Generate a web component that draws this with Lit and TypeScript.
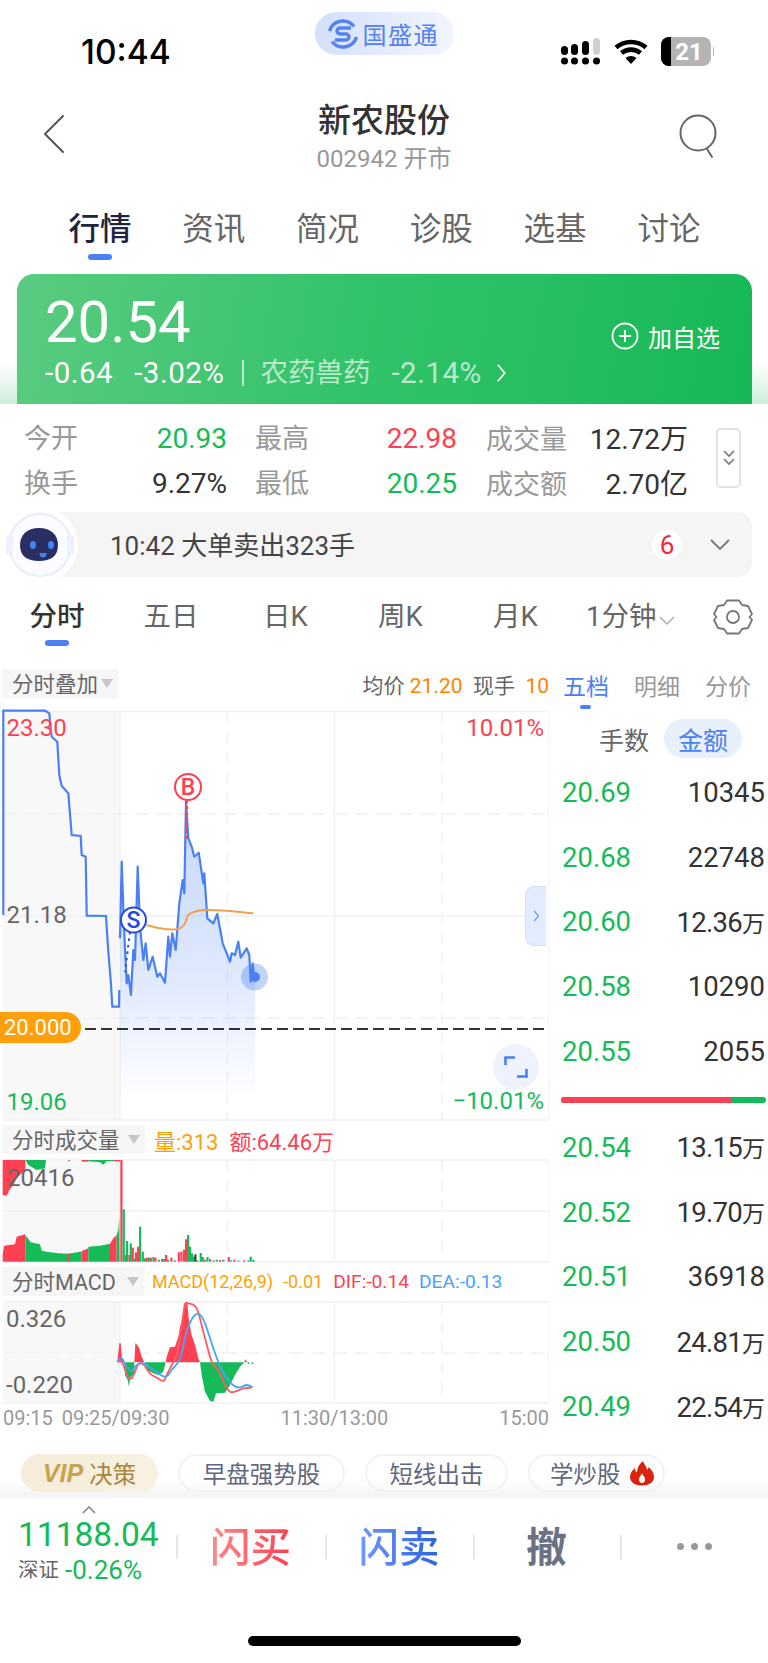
// app.ts
import { html, css, svg, LitElement } from "lit";
import { customElement } from "lit/decorators.js";

const RED = "#ff4053";
const GREEN = "#14bb58";
const BLUE = "#4a80f5";

type Pt = [number, number];

// points were read off the reference at 3x, so map them back to page px
const scale = (pts: Pt[], x0: number, y0: number): Pt[] => pts.map(([x, y]) => [x0 + x / 3, y0 + y / 3]);
const line = (pts: Pt[]) => pts.map(([x, y], i) => `${i ? "L" : "M"}${x.toFixed(1)} ${y.toFixed(1)}`).join("");

// catmull-rom through the points, for the average and macd lines
const smooth = (pts: Pt[]) => {
  let d = `M${pts[0][0].toFixed(1)} ${pts[0][1].toFixed(1)}`;
  for (let i = 0; i < pts.length - 1; i++) {
    const p0 = pts[Math.max(i - 1, 0)];
    const p1 = pts[i];
    const p2 = pts[i + 1];
    const p3 = pts[Math.min(i + 2, pts.length - 1)];
    const c1 = [p1[0] + (p2[0] - p0[0]) / 6, p1[1] + (p2[1] - p0[1]) / 6];
    const c2 = [p2[0] - (p3[0] - p1[0]) / 6, p2[1] - (p3[1] - p1[1]) / 6];
    d += `C${c1[0].toFixed(1)} ${c1[1].toFixed(1)} ${c2[0].toFixed(1)} ${c2[1].toFixed(1)} ${p2[0].toFixed(1)} ${p2[1].toFixed(1)}`;
  }
  return d;
};

const PRE_LINE = scale(
  [[10, 765], [10, 152], [135, 152], [148, 160], [155, 230], [172, 245], [178, 345], [185, 378], [205, 400], [215, 525], [242, 528], [245, 585], [257, 590], [260, 767], [318, 768], [325, 875], [332, 960], [337, 1040], [357, 1040], [358, 990]],
  0, 660
);
const DAY_LINE = scale(
  [[360, 835], [365, 605], [372, 800], [380, 970], [385, 945], [393, 1005], [400, 870], [405, 900], [413, 620], [420, 800], [430, 900], [437, 850], [445, 930], [458, 890], [472, 950], [480, 940], [495, 968], [505, 830], [510, 890], [517, 820], [527, 870], [538, 730], [548, 660], [553, 700], [558, 425], [565, 535], [575, 560], [583, 590], [596, 578], [610, 670], [613, 640], [622, 775], [640, 790], [652, 762], [668, 850], [690, 905], [695, 880], [705, 885], [715, 845], [722, 893], [740, 865], [748, 885], [752, 965], [758, 910], [765, 965]],
  0, 660
);
const AVG_LINE = scale(
  [[440, 795], [480, 805], [530, 808], [552, 795], [565, 765], [585, 755], [610, 750], [680, 752], [760, 760]],
  0, 660
);

const V0 = 1155;
const VOL_AREAS: [string, Pt[]][] = [
  [RED, [[8, 15], [8, 120], [20, 122], [28, 105], [40, 90], [50, 70], [65, 55], [76, 50], [76, 15]]],
  [GREEN, [[76, 15], [85, 30], [110, 45], [135, 40], [138, 15]]],
  [RED, [[205, 15], [205, 19], [210, 19], [210, 15]]],
  [RED, [[245, 15], [245, 20], [265, 20], [265, 15]]],
  [GREEN, [[265, 15], [265, 19], [300, 22], [310, 29], [320, 19], [340, 19], [340, 15]]],
  [RED, [[340, 15], [340, 19], [360, 19], [360, 15]]],
  [RED, [[8, 320], [8, 298], [12, 272], [45, 268], [50, 245], [76, 238], [76, 320]]],
  [GREEN, [[76, 320], [76, 240], [92, 262], [120, 268], [125, 287], [140, 290], [175, 295], [205, 296], [240, 290], [245, 290], [245, 320]]],
  [RED, [[202, 320], [202, 296], [208, 296], [208, 320]]],
  [RED, [[245, 320], [245, 288], [265, 280], [265, 320]]],
  [GREEN, [[265, 320], [265, 275], [300, 272], [330, 266], [330, 320]]],
  [RED, [[330, 320], [330, 266], [340, 250], [350, 240], [350, 320]]],
  [GREEN, [[350, 320], [350, 240], [355, 225], [358, 185], [359, 320]]],
];
// x, top, colour of the single minute bars after the open
const VOL_BARS: [number, number, string][] = [
  [364, 15, RED], [371, 163, GREEN], [378, 300, RED], [381, 258, GREEN], [388, 300, RED], [392, 265, GREEN], [398, 278, RED], [404, 310, GREEN], [408, 292, RED], [414, 275, RED], [420, 215, GREEN], [428, 290, GREEN], [434, 310, GREEN], [440, 308, RED], [446, 308, GREEN], [452, 308, RED], [460, 306, GREEN], [466, 308, RED], [476, 314, GREEN], [486, 312, GREEN], [492, 312, RED], [498, 300, RED], [504, 314, GREEN], [514, 308, RED], [524, 316, GREEN], [536, 292, RED], [544, 290, RED], [552, 284, RED], [558, 253, RED], [564, 240, GREEN], [570, 275, GREEN], [576, 295, GREEN], [582, 305, GREEN], [586, 298, "#444"], [592, 316, GREEN], [602, 294, GREEN], [608, 306, GREEN], [614, 314, RED], [622, 306, GREEN], [630, 312, GREEN], [640, 316, RED], [650, 314, GREEN], [660, 315, RED], [670, 314, GREEN], [686, 306, RED], [692, 316, GREEN], [703, 314, RED], [715, 317, GREEN], [732, 316, RED], [745, 316, GREEN], [752, 305, GREEN], [760, 315, GREEN],
];

const M0X = 100;
const M0Y = 1295;
const MACD_AREAS: [string, Pt[]][] = [
  [RED, [[52, 202], [58, 145], [62, 145], [66, 190], [72, 202]]],
  [RED, [[103, 202], [106, 145], [112, 150], [118, 160], [125, 185], [133, 202]]],
  [GREEN, [[72, 202], [75, 240], [83, 255], [87, 275], [90, 250], [103, 235], [103, 202]]],
  [GREEN, [[133, 202], [142, 225], [160, 235], [175, 240], [190, 230], [197, 202]]],
  [RED, [[197, 202], [200, 185], [210, 157], [225, 155], [235, 125], [240, 95], [248, 70], [252, 25], [262, 25], [266, 70], [275, 120], [285, 150], [295, 190], [300, 202]]],
  [GREEN, [[300, 202], [305, 240], [315, 290], [330, 318], [340, 320], [348, 295], [375, 293], [390, 270], [405, 240], [420, 215], [433, 202]]],
  [RED, [[433, 202], [437, 192], [441, 202]]],
  [GREEN, [[443, 202], [443, 207], [448, 207], [448, 202]]],
  [GREEN, [[455, 202], [455, 207], [460, 207], [460, 202]]],
];
const DIF: Pt[] = [[52, 200], [62, 198], [70, 210], [85, 248], [95, 250], [105, 230], [115, 208], [130, 208], [150, 235], [170, 248], [190, 258], [200, 240], [215, 210], [230, 180], [245, 90], [255, 30], [265, 25], [290, 40], [310, 110], [335, 200], [355, 225], [375, 270], [390, 290], [405, 290], [430, 280], [455, 278]];
const DEA: Pt[] = [[52, 200], [65, 190], [80, 215], [95, 228], [110, 210], [130, 205], [160, 225], [195, 245], [215, 225], [240, 190], [260, 110], [280, 65], [297, 57], [315, 85], [340, 160], [365, 225], [390, 262], [415, 277], [440, 270], [458, 277]];

const ASKS = [["20.69", "10345"], ["20.68", "22748"], ["20.60", "12.36万"], ["20.58", "10290"], ["20.55", "2055"]];
const BIDS = [["20.54", "13.15万"], ["20.52", "19.70万"], ["20.51", "36918"], ["20.50", "24.81万"], ["20.49", "22.54万"]];

const grid = (top: number, mid: number, bottom: number, midDash: boolean) => svg`
  <rect x="3" y=${top} width="117" height=${bottom - top} fill="#f8f8f8"></rect>
  <g stroke="#eff1f8" stroke-width="1.4" fill="none">
    <path d="M3 ${top}H549M3 ${bottom}H549M549 ${top}V${bottom}M120 ${top}V${bottom}M334.5 ${top}V${bottom}"></path>
    <path d="M3 ${mid}H549" stroke-dasharray=${midDash ? "14 8" : "none"}></path>
    <path d="M227.5 ${top}V${bottom}M442 ${top}V${bottom}" stroke-dasharray="12 8"></path>
  </g>
`;

@customElement("app-root")
export class AppRoot extends LitElement {
  static styles = css`
    :host {
      --red: #ff4053;
      --green: #14bb58;
      --blue: #4a80f5;
      display: block;
      width: 768px;
      height: 1663px;
      overflow: hidden;
      position: relative;
      background: #fff;
      color: #333;
      font-family: Roboto, "Noto Sans CJK SC", sans-serif;
    }
    .status { height: 92px; display: grid; grid-template-columns: 1fr 139px 1fr; }
    .time { font: 500 33.5px Inter, sans-serif; color: #000; padding: 32px 0 0 81px; }
    .brand {
      margin-top: 12px;
      height: 43px;
      border-radius: 22px;
      background: linear-gradient(100deg, #d3e0fd, #f3f6fe);
      display: flex;
      align-items: center;
      padding-left: 12px;
      gap: 4px;
      color: #5482f3;
      font-size: 24px;
      letter-spacing: 1.5px;
    }
    .status-icons { display: flex; justify-content: flex-end; padding: 36px 54px 0 0; }
    .nav { height: 90px; display: grid; grid-template-columns: 1fr auto 1fr; padding: 0 42px; align-items: start; }
    .nav-title { text-align: center; }
    .nav-title h1 { margin: 6px 0 0; font-size: 33px; line-height: 46px; font-weight: 500; color: #333; }
    .nav-title p { margin: 0; font-size: 24px; line-height: 30px; color: #999; }
    .nav svg { margin-top: 22px; }
    .nav .search { justify-self: end; margin-right: 7px; }
    .tabs { height: 92px; display: grid; grid-template-columns: repeat(6, 113.8px); padding-left: 43px; font-size: 31.5px; line-height: 40px; color: #666; }
    .tab { text-align: center; padding-top: 28px; position: relative; }
    .tab.on { color: #1c2540; font-weight: 500; }
    .tab.on::after, .period.on::after {
      content: "";
      position: absolute;
      left: 50%;
      transform: translateX(-50%);
      width: 24px;
      height: 6px;
      border-radius: 3px;
      background: var(--blue);
    }
    .tab.on::after { top: 72px; }
    .hero { height: 130px; padding: 0 16px 0 17px; background: linear-gradient(180deg, #fff 68%, #cfeeda); }
    .card {
      height: 130px;
      border-radius: 17px 17px 0 0;
      background: linear-gradient(100deg, #5acb80 0%, #33c36a 45%, #16b955 100%);
      color: #fff;
      display: flex;
      justify-content: space-between;
      padding: 0 32px 0 28px;
    }
    .price { font-size: 58px; line-height: 66px; margin-top: 15px; }
    .chg { display: flex; align-items: center; font-size: 29.5px; letter-spacing: 0.5px; line-height: 36px; white-space: nowrap; }
    .chg .soft { color: #bce8cd; }
    .chg .sector { font-size: 27.5px; letter-spacing: 0; }
    .chg span { margin-right: 21px; }
    .chg span.last { margin-right: 14px; }
    .chg i { width: 2px; height: 26px; background: #bce8cd; margin: 0 16px 0 -3px; }
    .add { display: flex; align-items: center; gap: 9px; font-size: 24px; height: 40px; margin-top: 42px; }
    .stats { height: 108px; padding: 10px 27px 0 24px; display: flex; justify-content: space-between; box-sizing: border-box; }
    .stat-grid { display: grid; grid-template-columns: 203px 230px 231px; grid-auto-rows: 45px; font-size: 27px; align-items: center; }
    .stat { display: flex; justify-content: space-between; align-items: baseline; color: #999; }
    .stat:nth-child(3n + 2) { padding-left: 28px; }
    .stat:nth-child(3n) { padding-left: 29px; }
    .stat b { font-weight: 400; font-size: 28px; color: #333; }
    .stat b.up { color: var(--red); }
    .stat b.down { color: var(--green); }
    .expand { width: 25px; height: 60px; border: 2px solid #e2e2e2; border-radius: 5px; margin-top: 14px; display: flex; align-items: center; justify-content: center; box-sizing: border-box; }
    .notice { margin: 0 16px 0 40px; height: 65px; background: #f5f5f5; border-radius: 0 14px 14px 0; display: flex; align-items: center; font-size: 26px; color: #444; }
    .robot { margin-left: -40px; width: 80px; height: 78px; flex: none; }
    .notice span { margin: 0 0 3px 30px; flex: 1; white-space: nowrap; }
    .badge { width: 30px; height: 30px; border-radius: 50%; background: #fff; color: #f02a3c; display: flex; align-items: center; justify-content: center; font-size: 26px; margin-right: 27px; }
    .chevron-down { margin-right: 21px; }
    .periods { height: 92px; display: grid; grid-template-columns: 114px 114px 115px 115px 115px 1fr; font-size: 27.5px; line-height: 36px; color: #666; position: relative; }
    .period { text-align: center; position: relative; padding-top: 22px; }
    .period.on { color: #333; font-weight: 500; }
    .period.on::after { top: 63px; }
    .period.more { display: flex; align-items: flex-start; gap: 3px; padding-left: 13px; white-space: nowrap; }
    .period.more svg { margin-top: 17px; }
    .gear { position: absolute; left: 713px; top: 20px; }
    .market { display: flex; height: 761px; }
    .charts { width: 549px; flex: none; position: relative; }
    .chart-head { display: flex; align-items: center; height: 29px; font-size: 21.5px; white-space: nowrap; }
    .chip { height: 29px; margin-left: 2px; padding: 0 0 3px 10px; background: #f6f6f6; color: #666; display: flex; align-items: center; box-sizing: border-box; flex: none; position: relative; }
    .chip::after { content: ""; position: absolute; right: 5px; top: 10px; border: 6px solid transparent; border-top: 9px solid #c6c6c6; border-bottom: 0; }
    .chip.w1 { width: 116px; }
    .chip.w2 { width: 143px; }
    .chip.w3 { width: 142px; }
    .head-right { margin-left: auto; color: #666; font-size: 21px; }
    .spacer { height: 7px; }
    .orange { color: #ff9f0a; }
    .deep { color: #ff8400; }
    .red { color: var(--red); }
    .sky { color: #4aa3f8; }
    .vol-info { margin-left: 9px; font-size: 22px; }
    .vol-info span + span { margin-left: 11px; }
    .macd-info { margin-left: 8px; font-size: 18px; }
    .macd-info span { margin-right: 10px; }
    .macd-info .red, .macd-info .sky { font-size: 19.2px; }
    svg.plot { display: block; }
    svg text { font-family: Roboto, sans-serif; }
    .axis { display: flex; justify-content: space-between; padding: 0 0 0 3px; font-size: 20px; line-height: 24px; color: #999; height: 24px; }
    .axis span:nth-child(2) { margin-left: -102px; }
    .target { position: absolute; left: 0; top: 343px; width: 81px; height: 31px; padding-left: 4px; box-sizing: border-box; background: #ff9f0a; color: #fff; font-size: 22px; border-radius: 0 16px 16px 0; display: flex; align-items: center; }
    .zoom { position: absolute; left: 493px; top: 375px; width: 46px; height: 46px; border-radius: 50%; background: #eff3fd; display: flex; align-items: center; justify-content: center; }
    .handle { position: absolute; left: 525px; top: 217px; width: 21px; height: 60px; box-sizing: border-box; background: #e2ecfe; border: 1px solid #cfdefb; border-right: 0; border-radius: 9px 0 0 9px; display: flex; align-items: center; justify-content: center; }
    .book { width: 207px; margin-left: 12px; flex: none; white-space: nowrap; }
    .book-tabs { height: 36px; display: flex; gap: 25px; padding: 1px 0 0 2px; box-sizing: border-box; font-size: 23px; line-height: 36px; color: #999; position: relative; }
    .book-tabs .on { color: var(--blue); position: relative; }
    .book-tabs .on::after { content: ""; position: absolute; left: 17px; top: 35px; width: 11px; height: 4px; border-radius: 2px; background: var(--blue); }
    .units { height: 39px; margin-top: 14px; display: flex; justify-content: flex-end; align-items: center; padding-right: 26px; font-size: 25px; color: #666; gap: 15px; }
    .units .on { width: 78px; height: 39px; border-radius: 20px; background: #e8effd; color: var(--blue); display: flex; align-items: center; justify-content: center; }
    .level { height: 64.8px; display: flex; justify-content: space-between; align-items: center; padding: 0 3px 0 1px; font-size: 27.5px; color: #333; }
    .level b { font-weight: 400; color: var(--green); }
    .level .wan { letter-spacing: -0.7px; }
    .level .wan i { font-style: normal; font-size: 23px; letter-spacing: 0; }
    .levels { margin-top: 2px; }
    .ratio { height: 6px; margin: 13px 2px 12px 0; border-radius: 3px; overflow: hidden; display: flex; background: var(--green); }
    .ratio i { display: block; background: var(--red); }
    .chips { display: flex; gap: 20px; margin: 24px 0 0 21px; height: 38px; font-size: 23.5px; color: #5f6880; }
    .pill { height: 38px; border-radius: 19px; border: 2px solid #f2f2f2; box-sizing: border-box; display: flex; align-items: center; justify-content: center; white-space: nowrap; }
    .pill.vip { width: 137px; border: 0; background: linear-gradient(90deg, #f5ecd9, #f8f1e2); color: #a8853f; gap: 6px; }
    .pill.vip em { font-family: "Liberation Sans", sans-serif; font-weight: 700; font-size: 25px; color: #c9a24e; }
    .pill.w1 { width: 167px; }
    .pill.w2 { width: 143px; }
    .pill.w3 { width: 137px; justify-content: flex-start; padding-left: 20px; gap: 8px; }
    .fade { height: 18px; margin-top: -12px; background: linear-gradient(180deg, rgba(240, 240, 240, 0), #f3f3f3); }
    .bar { display: grid; grid-template-columns: 176px 149px 148px 147px 148px; height: 112px; }
    .quote { padding-left: 18px; position: relative; white-space: nowrap; }
    .quote .caret { position: absolute; left: 82px; top: 8px; }
    .quote .last { font-size: 33.5px; line-height: 40px; margin-top: 17px; color: var(--green); }
    .quote .sub { display: flex; align-items: center; gap: 6px; font-size: 20.5px; line-height: 30px; color: #666; }
    .quote .sub b { font-weight: 400; font-size: 26px; color: var(--green); }
    .act { position: relative; display: flex; align-items: center; justify-content: center; height: 98px; padding-bottom: 6px; box-sizing: border-box; font-size: 40.5px; font-weight: 500; }
    .act::before { content: ""; position: absolute; left: 0; top: 37px; width: 2px; height: 24px; background: #e6e6e6; }
    .act span { background-clip: text; -webkit-background-clip: text; color: transparent; }
    .buy { background-image: linear-gradient(90deg, #ff8a8a, #ff3f52); }
    .sell { background-image: linear-gradient(90deg, #6f98ff, #2a62e0); }
    .act .undo { color: #6b7285; font-weight: 700; }
    .dots { display: flex; gap: 7px; margin-top: 5px; }
    .dots i { width: 7px; height: 7px; border-radius: 50%; background: #999; }
    .home { width: 273px; height: 10px; border-radius: 5px; background: #000; margin: 26px auto 0; }
  `;

  private chevronRight(color: string, w = 10, h = 18, sw = 2) {
    return html`<svg width=${w} height=${h} viewBox="0 0 10 18" fill="none" stroke=${color} stroke-width=${sw} stroke-linecap="round" stroke-linejoin="round"><path d="M2 2l6 7-6 7"></path></svg>`;
  }

  private renderStatus() {
    return html`<div class="status">
      <div class="time">10:44</div>
      <div class="brand">
        <svg width="32" height="32" viewBox="0 0 32 32" fill="none" stroke="#5482f3" stroke-width="3.4">
          <path d="M27 8.500A14 14 0 0 0 2.500 13"></path>
          <path d="M5 23.500A14 14 0 0 0 29.500 19"></path>
          <path d="M24 10H13a3 3 0 0 0 0 6h6a3 3 0 0 1 0 6H8"></path>
        </svg>
        国盛通
      </div>
      <div class="status-icons">
        <svg width="153" height="32" viewBox="562 36 153 32">
          <g fill="#000">
            <rect x="562" y="46" width="7" height="9" rx="3.5"></rect>
            <rect x="572" y="44" width="7" height="11" rx="3.5"></rect>
            <rect x="583" y="41" width="7" height="14" rx="3.5"></rect>
            <rect x="594" y="38" width="7" height="17" rx="3.5" fill="#cfcfcf"></rect>
            <circle cx="565.5" cy="61" r="3.5"></circle><circle cx="575.5" cy="61" r="3.5"></circle>
            <circle cx="586.5" cy="61" r="3.5"></circle><circle cx="597.5" cy="61" r="3.5"></circle>
          </g>
          <g fill="none" stroke="#000" stroke-width="4.6">
            <path d="M617 47.5a23 23 0 0 1 30 0"></path>
            <path d="M622.5 53a15 15 0 0 1 19 0"></path>
          </g>
          <path d="M626.5 58a9 9 0 0 1 11 0L632 64z" fill="#000"></path>
          <rect x="662" y="37" width="50" height="29" rx="8" fill="#b4b4b4"></rect>
          <path d="M670 37h2v29h-2a8 8 0 0 1-8-8V45a8 8 0 0 1 8-8z" fill="#000"></path>
          <path d="M714 47a5 5 0 0 1 0 9z" fill="#b4b4b4"></path>
          <text x="690" y="60" text-anchor="middle" fill="#fff" font-size="24" font-weight="700">21</text>
        </svg>
      </div>
    </div>`;
  }

  private renderNav() {
    return html`<div class="nav">
      <svg width="24" height="40" viewBox="0 0 24 40" fill="none" stroke="#555" stroke-width="2" stroke-linecap="round" stroke-linejoin="round"><path d="M21 2L3 20l18 18"></path></svg>
      <div class="nav-title">
        <h1>新农股份</h1>
        <p>002942 开市</p>
      </div>
      <svg class="search" width="40" height="44" viewBox="0 0 40 44" fill="none" stroke="#666" stroke-width="2" stroke-linecap="round"><circle cx="19" cy="19" r="17.5"></circle><path d="M28 35l5 8"></path></svg>
    </div>`;
  }

  private renderTabs() {
    const tabs = ["行情", "资讯", "简况", "诊股", "选基", "讨论"];
    return html`<div class="tabs">${tabs.map((t, i) => html`<div class="tab ${i === 0 ? "on" : ""}">${t}</div>`)}</div>`;
  }

  private renderHero() {
    return html`<div class="hero">
      <div class="card">
        <div>
          <div class="price">20.54</div>
          <div class="chg">
            <span>-0.64</span><span>-3.02%</span><i></i>
            <span class="soft sector">农药兽药</span><span class="soft last">-2.14%</span>
            ${this.chevronRight("#fff", 11, 20, 1.6)}
          </div>
        </div>
        <div class="add">
          <svg width="28" height="28" viewBox="0 0 28 28" fill="none" stroke="#fff" stroke-width="1.8"><circle cx="14" cy="14" r="12.5"></circle><path d="M14 8v12M8 14h12"></path></svg>
          加自选
        </div>
      </div>
    </div>`;
  }

  private renderStats() {
    const rows = [
      ["今开", "20.93", "down"], ["最高", "22.98", "up"], ["成交量", "12.72万", ""],
      ["换手", "9.27%", ""], ["最低", "20.25", "down"], ["成交额", "2.70亿", ""],
    ];
    return html`<div class="stats">
      <div class="stat-grid">
        ${rows.map(([l, v, c]) => html`<div class="stat">${l}<b class=${c}>${v}</b></div>`)}
      </div>
      <div class="expand">
        <svg width="14" height="18" viewBox="0 0 14 18" fill="none" stroke="#777" stroke-width="1.6"><path d="M2 2l5 5 5-5M2 10l5 5 5-5"></path></svg>
      </div>
    </div>`;
  }

  private renderNotice() {
    return html`<div class="notice">
      <svg class="robot" viewBox="0 0 80 78">
        <circle cx="40" cy="39" r="38" fill="#fff"></circle>
        <circle cx="40" cy="39" r="31" fill="#fbfcff" stroke="#e6eefc" stroke-width="2"></circle>
        <rect x="7" y="30" width="5" height="18" rx="2.5" fill="none" stroke="#e6eefc" stroke-width="1.5"></rect>
        <rect x="68" y="30" width="5" height="18" rx="2.5" fill="none" stroke="#e6eefc" stroke-width="1.5"></rect>
        <path d="M39 22c12 0 19 7 19 17 0 11-7 16-19 16S20 50 20 39c0-10 7-17 19-17z" fill="#2a2e63"></path>
        <ellipse cx="33" cy="39" rx="3" ry="4" fill="#3f86f5"></ellipse>
        <ellipse cx="51" cy="39" rx="3" ry="4" fill="#3f86f5"></ellipse>
        <path d="M39.5 47h7c0 3-1.5 4.500-3.500 4.500s-3.500-1.500-3.500-4.500z" fill="#3f86f5"></path>
      </svg>
      <span>10:42 大单卖出323手</span>
      <div class="badge">6</div>
      <svg class="chevron-down" width="22" height="12" viewBox="0 0 22 12" fill="none" stroke="#777" stroke-width="1.8"><path d="M2 1l9 9 9-9"></path></svg>
    </div>`;
  }

  private renderPeriods() {
    const items = ["分时", "五日", "日K", "周K", "月K"];
    return html`<div class="periods">
      ${items.map((t, i) => html`<div class="period ${i === 0 ? "on" : ""}">${t}</div>`)}
      <div class="period more">1分钟
        <svg width="16" height="10" viewBox="0 0 16 10" fill="none" stroke="#aaa" stroke-width="1.4"><path d="M1 1l7 7 7-7"></path></svg>
      </div>
      <svg class="gear" width="40" height="40" viewBox="0 0 40 40" fill="none" stroke="#777" stroke-width="1.8" stroke-linejoin="round">
        <path d="M14 3.500h12l3 4.500 6 1 4 8-2.500 3 2.500 3-4 8-6 1-3 4.500H14l-3-4.500-6-1-4-8L3.500 20 1 17l4-8 6-1z"></path>
        <circle cx="20" cy="20" r="6"></circle>
      </svg>
    </div>`;
  }

  private renderPriceChart() {
    const area = `${line(DAY_LINE)}L${DAY_LINE[DAY_LINE.length - 1][0].toFixed(1)} 1106L120 1106Z`;
    return svg`<svg class="plot" width="549" height="420" viewBox="0 705 549 420">
      <defs>
        <linearGradient id="fill" gradientUnits="userSpaceOnUse" x1="0" y1="800" x2="0" y2="1100">
          <stop offset="0" stop-color="#4a80f5" stop-opacity=".32"></stop>
          <stop offset=".6" stop-color="#4a80f5" stop-opacity=".17"></stop>
          <stop offset="1" stop-color="#4a80f5" stop-opacity="0"></stop>
        </linearGradient>
      </defs>
      ${grid(711.5, 916, 1120, false)}
      <path d="M3 814H549M3 1018H549" stroke="#eff1f8" stroke-width="1.4" stroke-dasharray="14 8"></path>
      <path d=${area} fill="url(#fill)"></path>
      <path d="M85 1029H549" stroke="#333" stroke-width="1.8" stroke-dasharray="11 5"></path>
      <path d=${line(PRE_LINE)} fill="none" stroke=${BLUE} stroke-width="2.2"></path>
      <path d=${line(DAY_LINE)} fill="none" stroke=${BLUE} stroke-width="2.2" stroke-linejoin="round"></path>
      <path d=${smooth(AVG_LINE)} fill="none" stroke="#f0a24a" stroke-width="2"></path>
      <path d="M130 932L125 972" stroke="#2547e8" stroke-width="2" stroke-dasharray="2.500 4"></path>
      <circle cx="133.500" cy="920" r="12.500" fill="#fff" stroke="#2547e8" stroke-width="2"></circle>
      <text x="133.500" y="928" text-anchor="middle" font-size="23" font-weight="500" fill="#2547e8">S</text>
      <path d="M187 800V840" stroke=${RED} stroke-width="2" stroke-dasharray="3 3"></path>
      <circle cx="188" cy="787" r="13" fill="#fff" stroke=${RED} stroke-width="2"></circle>
      <text x="188" y="795" text-anchor="middle" font-size="23" font-weight="500" fill=${RED}>B</text>
      <circle cx="254.500" cy="977" r="13.500" fill=${BLUE} fill-opacity=".35"></circle>
      <circle cx="255" cy="977" r="5" fill=${BLUE}></circle>
      <g font-size="24">
        <text x="6.500" y="736" fill=${RED}>23.30</text>
        <text x="6.500" y="923" fill="#666">21.18</text>
        <text x="6.500" y="1110" fill=${GREEN}>19.06</text>
        <text x="544" y="736" text-anchor="end" fill=${RED}>10.01%</text>
        <text x="544" y="1109" text-anchor="end" fill=${GREEN}>−10.01%</text>
      </g>
    </svg>`;
  }

  private renderVolumeChart() {
    return svg`<svg class="plot" width="549" height="113" viewBox="0 1154 549 113">
      ${grid(1160, 1211, 1262, false)}
      ${VOL_AREAS.map(([c, p]) => svg`<polygon fill=${c} points=${scale(p, 0, V0).map((q) => q.join(",")).join(" ")}></polygon>`)}
      ${VOL_BARS.map(([x, top, c]) => svg`<rect x=${x / 3 - 1} y=${V0 + top / 3} width="2.2" height=${(320 - top) / 3} fill=${c}></rect>`)}
      <text x="7" y="1186" font-size="24" fill="#666">20416</text>
    </svg>`;
  }

  private renderMacdChart() {
    return svg`<svg class="plot" width="549" height="110" viewBox="0 1296 549 110">
      ${grid(1302, 1353, 1403, true)}
      ${MACD_AREAS.map(([c, p]) => svg`<polygon fill=${c} points=${scale(p, M0X, M0Y).map((q) => q.join(",")).join(" ")}></polygon>`)}
      <path d=${smooth(scale(DIF, M0X, M0Y))} fill="none" stroke="#ff5a63" stroke-width="1.8"></path>
      <path d=${smooth(scale(DEA, M0X, M0Y))} fill="none" stroke="#4aa3f8" stroke-width="1.8"></path>
      <text x="6" y="1327" font-size="24" fill="#666">0.326</text>
      <text x="6" y="1393" font-size="24" fill="#666">-0.220</text>
    </svg>`;
  }

  private renderCharts() {
    return html`<div class="charts">
      <div class="chart-head">
        <div class="chip w1">分时叠加</div>
        <div class="head-right">均价 <span class="deep">21.20</span>&nbsp; 现手 <span class="deep">&nbsp;10</span></div>
      </div>
      <div class="spacer"></div>
      ${this.renderPriceChart()}
      <div class="target">20.000</div>
      <div class="handle">${this.chevronRight(BLUE, 7, 12, 1.6)}</div>
      <div class="zoom">
        <svg width="24" height="22" viewBox="0 0 24 22" fill="none" stroke=${BLUE} stroke-width="2.6"><path d="M1.500 9V1.500H11M22.500 13v7.500H13"></path></svg>
      </div>
      <div class="chart-head">
        <div class="chip w2">分时成交量</div>
        <div class="vol-info"><span class="orange">量:313</span><span class="red">额:64.46万</span></div>
      </div>
      ${this.renderVolumeChart()}
      <div class="chart-head">
        <div class="chip w3">分时MACD</div>
        <div class="macd-info"><span class="orange">MACD(12,26,9)</span><span class="orange">-0.01</span><span class="red">DIF:-0.14</span><span class="sky">DEA:-0.13</span></div>
      </div>
      ${this.renderMacdChart()}
      <div class="axis"><span>09:15</span><span>09:25/09:30</span><span>11:30/13:00</span><span>15:00</span></div>
    </div>`;
  }

  private renderBook() {
    const level = ([p, v]: string[]) => html`<div class="level"><b>${p}</b>${
      v.endsWith("万") ? html`<span class="wan">${v.slice(0, -1)}<i>万</i></span>` : html`<span>${v}</span>`
    }</div>`;
    return html`<div class="book">
      <div class="book-tabs"><span class="on">五档</span><span>明细</span><span>分价</span></div>
      <div class="units"><span>手数</span><span class="on">金额</span></div>
      <div class="levels">${ASKS.map(level)}</div>
      <div class="ratio"><i style="width:${(171 / 205) * 100}%"></i></div>
      ${BIDS.map(level)}
    </div>`;
  }

  private renderChips() {
    return html`<div class="chips">
      <div class="pill vip"><em>VIP</em>决策</div>
      <div class="pill w1">早盘强势股</div>
      <div class="pill w2">短线出击</div>
      <div class="pill w3">学炒股
        <svg width="26" height="26" viewBox="0 0 26 26"><path d="M14 1c1 4 4 5 4 9 1-1 1.500-2 1.500-3C23 10 25 13.500 25 17c0 5-5 8.500-12 8.500S1 22 1 17c0-4 2.500-7 5-9 0 2 .5 3.500 2 4.500C8 8 10 4 14 1z" fill="#d9230f"></path><path d="M13 13c.5 2.500 3 3.500 3 6.500 0 2-1.300 3.500-3 3.500s-3-1.500-3-3.500c0-3 2.500-4 3-6.500z" fill="#fff"></path></svg>
      </div>
    </div>`;
  }

  private renderBar() {
    return html`<div class="fade"></div>
    <div class="bar">
      <div class="quote">
        <svg class="caret" width="14" height="8" viewBox="0 0 14 8" fill="none" stroke="#888" stroke-width="1.6"><path d="M1 7l6-6 6 6"></path></svg>
        <div class="last">11188.04</div>
        <div class="sub">深证 <b>-0.26%</b></div>
      </div>
      <div class="act"><span class="buy">闪买</span></div>
      <div class="act"><span class="sell">闪卖</span></div>
      <div class="act"><div class="undo">撤</div></div>
      <div class="act"><div class="dots"><i></i><i></i><i></i></div></div>
    </div>
    <div class="home"></div>`;
  }

  override render() {
    return html`
      ${this.renderStatus()}
      ${this.renderNav()}
      ${this.renderTabs()}
      ${this.renderHero()}
      ${this.renderStats()}
      ${this.renderNotice()}
      ${this.renderPeriods()}
      <div class="market">${this.renderCharts()}${this.renderBook()}</div>
      ${this.renderChips()}
      ${this.renderBar()}
    `;
  }
}
